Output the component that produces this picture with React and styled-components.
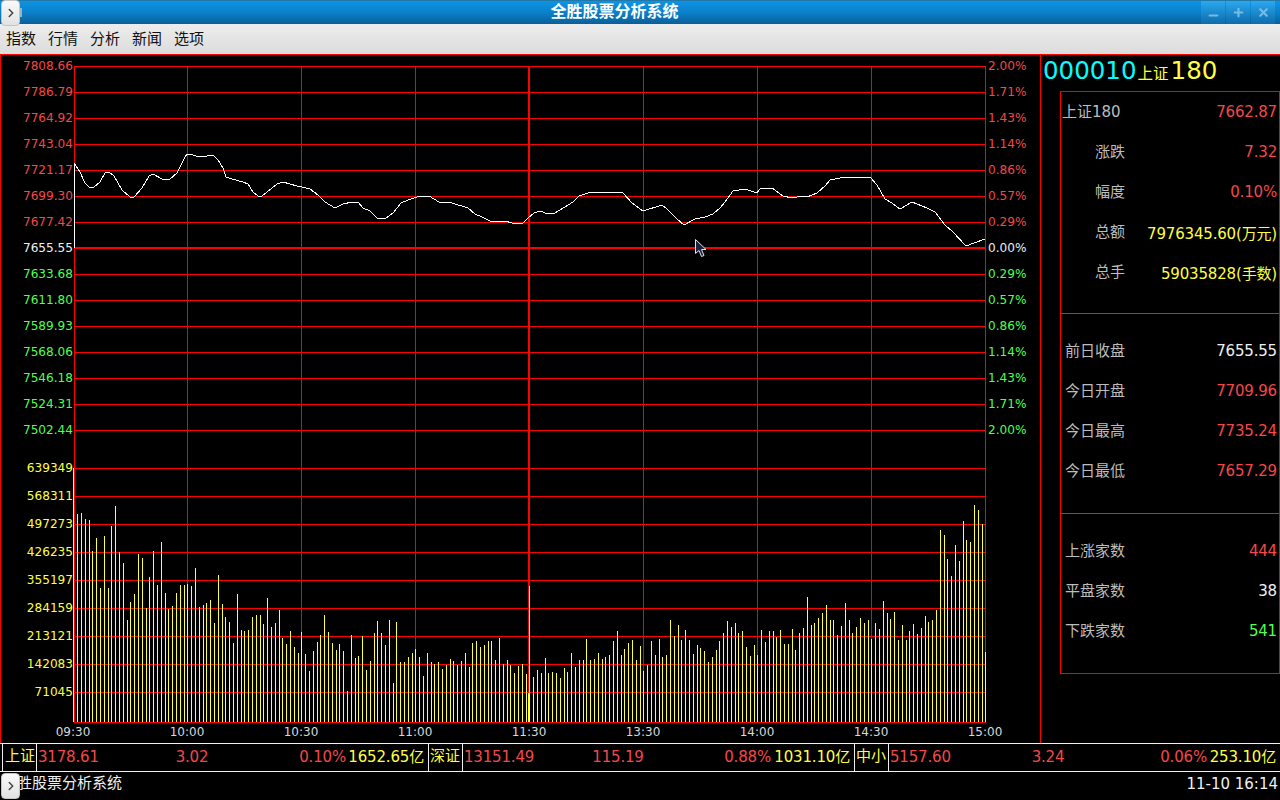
import React from 'react'
import styled, { createGlobalStyle } from 'styled-components'
import { ChevronRight, Minus, Plus, X } from 'lucide-react'

const RED = '#f44848'
const GREEN = '#50ff50'
const YELLOW = '#ffff40'
const WHITE = '#f0f0f0'
const GRAY = '#bdbdbd'

const PRICE_LINES = [66, 92, 118, 144, 170, 196, 222, 248, 274, 300, 326, 352, 378, 404, 430]
const VOLUME_LINES = [468, 496, 524, 552, 580, 608, 636, 664, 692, 722]
const TIME_LINES = [74, 187, 301, 415, 529, 643, 757, 871, 985]

const PRICES = [
  ['7808.66', '2.00%', RED], ['7786.79', '1.71%', RED], ['7764.92', '1.43%', RED], ['7743.04', '1.14%', RED],
  ['7721.17', '0.86%', RED], ['7699.30', '0.57%', RED], ['7677.42', '0.29%', RED], ['7655.55', '0.00%', WHITE],
  ['7633.68', '0.29%', GREEN], ['7611.80', '0.57%', GREEN], ['7589.93', '0.86%', GREEN], ['7568.06', '1.14%', GREEN],
  ['7546.18', '1.43%', GREEN], ['7524.31', '1.71%', GREEN], ['7502.44', '2.00%', GREEN],
]
const VOLUMES = ['639349', '568311', '497273', '426235', '355197', '284159', '213121', '142083', '71045']
const TIMES = ['09:30', '10:00', '10:30', '11:00', '11:30', '13:30', '14:00', '14:30', '15:00']

// read off the reference, in page pixels
const PRICE_PATH = [
  [74, 248], [74, 163], [80, 172], [85, 183], [90, 188], [94, 187], [100, 182], [105, 173], [109, 172], [114, 176],
  [122, 190], [130, 197], [134, 197], [142, 188], [149, 176], [153, 174], [162, 179], [170, 179], [177, 173],
  [185, 157], [187, 154], [193, 155], [196, 156], [207, 156], [213, 155], [218, 160], [223, 168], [226, 177],
  [232, 179], [243, 182], [248, 184], [253, 192], [258, 196], [262, 196], [272, 188], [277, 184], [283, 182],
  [290, 184], [297, 186], [302, 187], [310, 189], [318, 195], [325, 202], [335, 208], [343, 204], [352, 202],
  [358, 202], [363, 208], [370, 211], [378, 219], [386, 218], [393, 213], [401, 203], [408, 200], [417, 197],
  [429, 196], [439, 202], [452, 203], [468, 208], [475, 214], [482, 217], [492, 222], [505, 221], [512, 223],
  [522, 224], [528, 218], [534, 213], [540, 211], [548, 214], [555, 213], [573, 202], [579, 196], [588, 193],
  [600, 192], [612, 192], [623, 193], [632, 203], [643, 211], [662, 205], [667, 209], [677, 219], [684, 225],
  [695, 219], [705, 217], [713, 214], [720, 208], [725, 202], [733, 191], [745, 189], [757, 193], [760, 189],
  [772, 188], [783, 196], [792, 198], [802, 196], [807, 197], [817, 193], [825, 186], [830, 180], [840, 178],
  [852, 177], [870, 177], [877, 185], [885, 199], [892, 203], [900, 209], [912, 202], [927, 208], [935, 212],
  [945, 225], [953, 232], [966, 246], [985, 239],
]

const BAR_TOPS = [
  468, 514, 513, 519, 520, 551, 538, 588, 536, 588, 526, 506, 552, 563, 620, 602, 594, 554, 558, 608,
  577, 551, 585, 542, 593, 609, 606, 593, 585, 585, 584, 586, 568, 607, 605, 603, 600, 623, 575, 604,
  617, 622, 643, 594, 630, 631, 630, 617, 615, 615,
  624, 598, 627, 623, 610, 638, 644, 631, 647, 653, 632, 654, 671, 651, 642, 635, 615, 632, 643, 650,
  644, 651, 691, 635, 658, 656, 636, 670, 661, 633, 621, 633, 645, 620, 683, 622, 662, 662, 657, 653,
  649, 657, 676, 653, 662, 664, 662, 669, 665, 659, 661, 665, 661, 653, 667, 643, 641, 647, 645, 641,
  641, 660, 638, 664, 660, 665, 673, 666, 664, 674, 586, 677, 670, 673, 658, 673, 672, 673, 678,
  668, 672, 653, 667, 660, 660, 639, 660, 659, 653, 659, 657, 655, 641, 631, 655, 649, 643, 640, 660,
  646, 671, 665, 641, 655, 639, 657, 655, 620, 636, 625, 640, 630, 640, 654, 645, 648, 651, 662, 657,
  650, 641, 633, 621, 627, 623, 633, 631, 647, 656, 645, 655, 630, 642, 631, 631, 637, 630, 644, 644,
  629, 650, 633, 628, 597, 625, 623, 618, 613, 605, 620, 620, 635, 626, 603, 620,
  633, 627, 618, 623, 620, 639, 623, 629, 601, 613, 619, 612, 640, 625, 640, 631, 624, 634, 628, 616,
  622, 620, 610, 530, 535, 559, 576, 545, 561, 521, 540, 542, 505, 510, 524, 652,
]

const SECTIONS = [
  [
    ['上证180', '7662.87', RED, 'left'],
    ['涨跌', '7.32', RED],
    ['幅度', '0.10%', RED],
    ['总额', '7976345.60(万元)', YELLOW],
    ['总手', '59035828(手数)', YELLOW],
  ],
  [
    ['前日收盘', '7655.55', WHITE],
    ['今日开盘', '7709.96', RED],
    ['今日最高', '7735.24', RED],
    ['今日最低', '7657.29', RED],
  ],
  [
    ['上涨家数', '444', RED],
    ['平盘家数', '38', WHITE],
    ['下跌家数', '541', GREEN],
  ],
]

const TICKERS = [
  { name: '上证', cols: '76px 156px 76px 78px', values: ['3178.61', '3.02', '0.10%', '1652.65亿'] },
  { name: '深证', cols: '76px 156px 75px 79px', values: ['13151.49', '115.19', '0.88%', '1031.10亿'] },
  { name: '中小', cols: '80px 156px 81px 69px', values: ['5157.60', '3.24', '0.06%', '253.10亿'] },
]

const GlobalStyle = createGlobalStyle`
  html, body {
    margin: 0;
    background: #000;
    overflow: hidden;
  }
  body {
    font-family: "DejaVu Sans", "Noto Sans CJK SC", sans-serif;
  }
`

const Page = styled.div`
  position: relative;
  width: 1280px;
  height: 800px;
  background: #000;
  overflow: hidden;
`

const TitleBar = styled.div`
  display: flex;
  align-items: stretch;
  box-sizing: border-box;
  height: 24px;
  padding: 0 5px 0 19px;
  background: linear-gradient(180deg, #0d94e4 0%, #0b80ca 50%, #0a5f98 100%);
  border-top: 1px solid #2478a8;
`

const WindowIcon = styled.span`
  align-self: center;
  width: 3px;
  height: 9px;
  background: #9ab4c4;
`

const Title = styled.div`
  flex: 1;
  padding-left: 7px;
  color: #fff;
  font-size: 16px;
  font-weight: bold;
  line-height: 22px;
  text-align: center;
`

const WindowButton = styled.div`
  display: flex;
  align-items: center;
  justify-content: center;
  width: 24px;
  margin-left: 1px;
  padding-top: ${(p) => p.$drop || 0}px;
  box-sizing: border-box;
  color: #74bce8;
  background: linear-gradient(180deg, #2aa8f0 0%, #0d6cab 100%);
`

const MenuBar = styled.div`
  display: flex;
  align-items: center;
  gap: 12px;
  box-sizing: border-box;
  height: 31px;
  padding: 0 0 4px 6px;
  background: linear-gradient(180deg, #ededed 0%, #dcdcdc 100%);
  border-bottom: 1px solid #ff0000;
  color: #111;
  font-size: 15px;
`

const Main = styled.div`
  display: flex;
  height: 688px;
`

const ChartPane = styled.div`
  box-sizing: border-box;
  width: 1041px;
  border-left: 1px solid #ff0000;
  border-right: 1px solid #ff0000;
`

const ChartBody = styled.div`
  display: flex;
  height: 669px;
`

const Axis = styled.div`
  display: flex;
  flex-direction: column;
  flex: 0 0 ${(p) => p.$width}px;
  padding-left: ${(p) => (p.$align === 'left' ? 2 : 0)}px;
  box-sizing: border-box;
  text-align: ${(p) => p.$align};
`

const AxisGroup = styled.div`
  display: flex;
  flex-direction: column;
  gap: ${(p) => p.$gap}px;
  margin-bottom: 16px;
`

const AxisLabel = styled.div`
  height: 22px;
  color: ${(p) => p.$color};
  font-size: 12.1px;
  line-height: 22px;
  white-space: nowrap;
`

const Plot = styled.svg`
  display: block;
  flex: 0 0 913px;
  margin-top: 10px;
  shape-rendering: crispEdges;
`

const TimeAxis = styled.div`
  display: flex;
  height: 19px;
  padding-left: 15px;
`

const TimeLabel = styled.div`
  flex: 0 0 114px;
  color: #d8d8d8;
  font-size: 12px;
  line-height: 16px;
  text-align: center;
`

const SidePanel = styled.div`
  flex: 1;
`

const SideHeader = styled.div`
  display: flex;
  align-items: baseline;
  box-sizing: border-box;
  height: 36px;
  padding-left: 2px;
  font-size: 24.5px;
  line-height: 32px;
`

const Code = styled.span`
  margin-right: 1px;
  color: #00ffff;
`

const SideName = styled.span`
  color: ${YELLOW};
`

const SideNameCjk = styled.span`
  margin-right: 2px;
  font-size: 15.5px;
`

const InfoBox = styled.div`
  box-sizing: border-box;
  width: 220px;
  margin-left: 19px;
  border: 1px solid #ff0000;
`

const InfoSection = styled.div`
  padding: ${(p) => (p.$first ? '0 0 21px' : '17px 0 22px')};
  border-top: ${(p) => (p.$first ? 'none' : '1px solid #c03030')};
`

const InfoRow = styled.div`
  display: flex;
  justify-content: space-between;
  align-items: center;
  height: 40px;
  padding-right: 2px;
`

const InfoLabel = styled.span`
  box-sizing: border-box;
  width: 64px;
  padding-left: ${(p) => (p.$align === 'left' ? 1 : 0)}px;
  padding-bottom: 4px;
  color: ${GRAY};
  font-size: 15px;
  text-align: ${(p) => p.$align || 'right'};
  white-space: nowrap;
`

const InfoValue = styled.span`
  color: ${(p) => p.$color};
  font-size: 15px;
  letter-spacing: -0.17px;
  white-space: nowrap;
`

const Ticker = styled.div`
  display: flex;
  box-sizing: border-box;
  height: 29px;
  padding-left: 2px;
  border-top: 1px solid #f0f0f0;
  border-bottom: 1px solid #f0f0f0;
  font-size: 15px;
  letter-spacing: -0.17px;
  line-height: 27px;
`

const TickerName = styled.div`
  box-sizing: border-box;
  flex: 0 0 ${(p) => (p.$first ? 35 : 34)}px;
  padding-left: ${(p) => (p.$first ? 2 : 1)}px;
  border-left: ${(p) => (p.$first ? '1px solid #f0f0f0' : 'none')};
  border-right: 1px solid #f0f0f0;
  color: ${YELLOW};
  letter-spacing: 0;
  line-height: 25px;
  white-space: nowrap;
`

const TickerData = styled.div`
  display: grid;
  grid-template-columns: ${(p) => p.$cols};
  box-sizing: border-box;
  flex: ${(p) => (p.$last ? '1' : '0 0 392px')};
  padding-left: 1px;
  border-right: ${(p) => (p.$last ? 'none' : '1px solid #f0f0f0')};
`

const TickerValue = styled.span`
  color: ${(p) => (p.$yellow ? YELLOW : RED)};
  text-align: ${(p) => p.$align};
  white-space: nowrap;
`

const StatusBar = styled.div`
  display: flex;
  justify-content: space-between;
  align-items: center;
  box-sizing: border-box;
  height: 28px;
  padding: 0 2px 4px 2px;
  color: ${WHITE};
  font-size: 15px;
`

const StatusTitle = styled.span`
  padding-bottom: 5px;
`

const DockHandle = styled.div`
  position: absolute;
  left: 1px;
  top: ${(p) => p.$top}px;
  display: flex;
  align-items: center;
  justify-content: center;
  box-sizing: border-box;
  width: 19px;
  height: 26px;
  color: #444;
  background: linear-gradient(180deg, #fafafa 0%, #e2e2e2 100%);
  border: 1px solid #c4c4c4;
  border-radius: 4px;
`

const Cursor = styled.svg`
  position: absolute;
  left: 694px;
  top: 238px;
`

const Chart = () => (
  <Plot width="913" height="659" viewBox="73 65 913 659">
    {PRICE_LINES.map((y) => (
      <rect key={y} x="74" y={y === 248 ? 247 : y} width="912" height={y === 248 ? 2 : 1} fill="#ff0000" />
    ))}
    {VOLUME_LINES.map((y) => (
      <rect key={y} x="74" y={y} width="912" height="1" fill="#ff0000" />
    ))}
    {TIME_LINES.map((x) => (
      <rect key={x} x={x === 529 ? 528 : x} y="66" width={x === 529 ? 2 : 1} height="657" fill="#ff0000" />
    ))}
    {BAR_TOPS.map((top, i) => (
      <rect key={i} x={Math.floor(73.99 + 3.8 * i)} y={top} width="1" height={722 - top} fill={YELLOW} />
    ))}
    <rect x="528" y="693" width="2" height="29" fill={YELLOW} />
    <polyline
      points={PRICE_PATH.map((p) => p.join(',')).join(' ')}
      fill="none"
      stroke="#ffffff"
      strokeWidth="1"
    />
  </Plot>
)

const App = () => (
  <Page>
    <GlobalStyle />
    <TitleBar>
      <WindowIcon />
      <Title>全胜股票分析系统</Title>
      <WindowButton $drop={5}><Minus size={13} strokeWidth={4} /></WindowButton>
      <WindowButton><Plus size={13} strokeWidth={4} /></WindowButton>
      <WindowButton><X size={13} strokeWidth={4} /></WindowButton>
    </TitleBar>
    <MenuBar>
      <span>指数</span>
      <span>行情</span>
      <span>分析</span>
      <span>新闻</span>
      <span>选项</span>
    </MenuBar>
    <Main>
      <ChartPane>
        <ChartBody>
          <Axis $width={72} $align="right">
            <AxisGroup $gap={4}>
              {PRICES.map(([price, , color]) => (
                <AxisLabel key={price} $color={color}>{price}</AxisLabel>
              ))}
            </AxisGroup>
            <AxisGroup $gap={6}>
              {VOLUMES.map((v) => (
                <AxisLabel key={v} $color={YELLOW}>{v}</AxisLabel>
              ))}
            </AxisGroup>
          </Axis>
          <Chart />
          <Axis $width={54} $align="left">
            <AxisGroup $gap={4}>
              {PRICES.map(([price, pct, color]) => (
                <AxisLabel key={price} $color={color}>{pct}</AxisLabel>
              ))}
            </AxisGroup>
          </Axis>
        </ChartBody>
        <TimeAxis>
          {TIMES.map((t) => <TimeLabel key={t}>{t}</TimeLabel>)}
        </TimeAxis>
      </ChartPane>
      <SidePanel>
        <SideHeader>
          <Code>000010</Code>
          <SideName><SideNameCjk>上证</SideNameCjk>180</SideName>
        </SideHeader>
        <InfoBox>
          {SECTIONS.map((rows, i) => (
            <InfoSection key={i} $first={i === 0}>
              {rows.map(([label, value, color, align]) => (
                <InfoRow key={label}>
                  <InfoLabel $align={align}>{label}</InfoLabel>
                  <InfoValue $color={color}>{value}</InfoValue>
                </InfoRow>
              ))}
            </InfoSection>
          ))}
        </InfoBox>
      </SidePanel>
    </Main>
    <Ticker>
      {TICKERS.map((t, i) => (
        <React.Fragment key={t.name}>
          <TickerName $first={i === 0}>{t.name}</TickerName>
          <TickerData $cols={t.cols} $last={i === TICKERS.length - 1}>
            <TickerValue $align="left">{t.values[0]}</TickerValue>
            <TickerValue $align="center">{t.values[1]}</TickerValue>
            <TickerValue $align="right">{t.values[2]}</TickerValue>
            <TickerValue $align="right" $yellow>{t.values[3]}</TickerValue>
          </TickerData>
        </React.Fragment>
      ))}
    </Ticker>
    <StatusBar>
      <StatusTitle>全胜股票分析系统</StatusTitle>
      <span>11-10 16:14</span>
    </StatusBar>
    <DockHandle $top={0}><ChevronRight size={14} strokeWidth={2.5} /></DockHandle>
    <DockHandle $top={773}><ChevronRight size={14} strokeWidth={2.5} /></DockHandle>
    <Cursor width="14" height="21" viewBox="0 0 14 21">
      <path d="M1.5 1.5 L1.5 15.5 L5 12.5 L7.5 18.5 L10 17.5 L7.5 11.5 L12 11.5 Z" fill="#1c2340" stroke="#dfe3f0" strokeWidth="1" />
    </Cursor>
  </Page>
)

export default App
